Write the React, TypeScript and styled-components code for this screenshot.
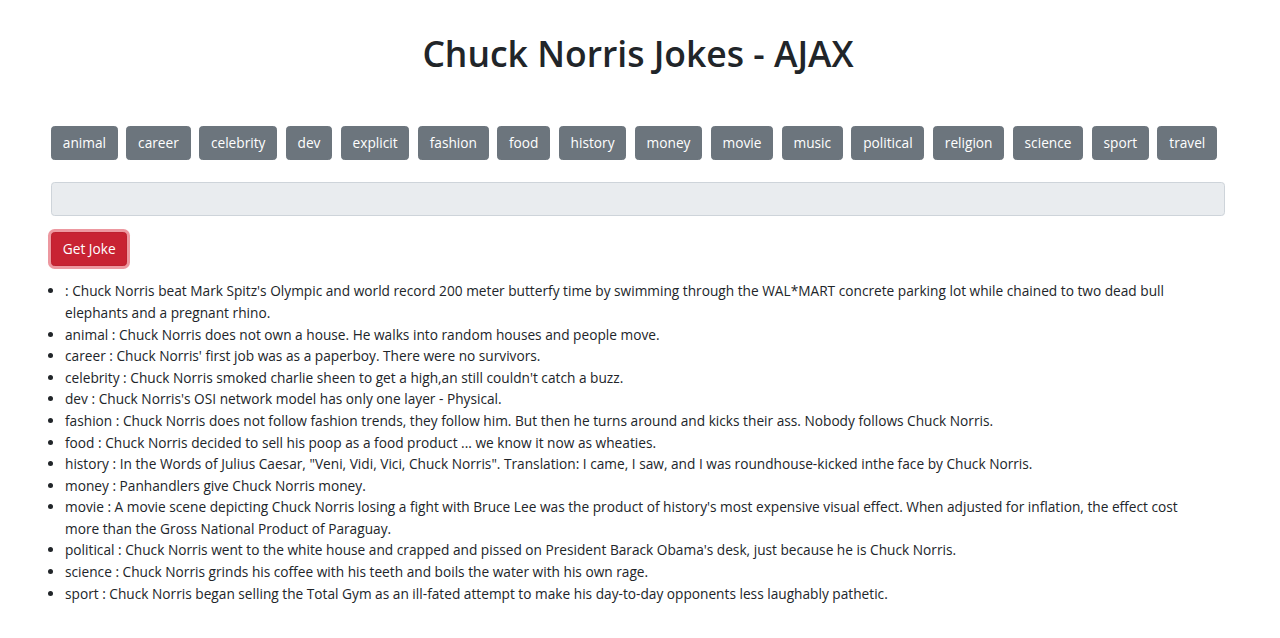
import React from "react";
import styled, { createGlobalStyle } from "styled-components";

const Global = createGlobalStyle`
  html, body { margin: 0; padding: 0; background: #fff; }
  body {
    font-family: "Open Sans", "Noto Sans", sans-serif;
    font-size: 13.7px;
    line-height: 1.5;
    color: #212529;
  }
`;

const Page = styled.div`
  width: 1174px;
  margin: 0 0 0 51px;
  padding-top: 32px;
`;

const Title = styled.h1`
  margin: 0 0 51px;
  text-align: center;
  font-size: 35.5px;
  font-weight: 600;
  line-height: 1.2;
  color: #212529;
`;

const Categories = styled.div`
  display: flex;
  flex-wrap: wrap;
  gap: 8.5px;
`;

const Button = styled.button<{ $variant?: "secondary" | "danger" }>`
  font-family: inherit;
  font-size: 13.7px;
  line-height: 21.6px;
  padding: 5.4px 10.8px;
  border-radius: 3.6px;
  border: 1px solid ${(p) => (p.$variant === "danger" ? "#bd2130" : "#6c757d")};
  background: ${(p) => (p.$variant === "danger" ? "#c82333" : "#6c757d")};
  color: #fff;
  cursor: pointer;
  box-shadow: ${(p) =>
    p.$variant === "danger" ? "0 0 0 3px rgba(225, 83, 97, 0.6)" : "none"};
`;

const Input = styled.input`
  display: block;
  box-sizing: border-box;
  width: 100%;
  height: 34px;
  margin: 22px 0 16px;
  padding: 5px 10.8px;
  font-family: inherit;
  font-size: 13.7px;
  background: #e9ecef;
  border: 1px solid #ced4da;
  border-radius: 3.6px;
`;

const Jokes = styled.ul`
  margin: 14px 0 0;
  padding: 0 20px 0 14px;
  line-height: 21.6px;
`;

const Joke = styled.li``;

const categories = [
  "animal", "career", "celebrity", "dev", "explicit", "fashion", "food", "history",
  "money", "movie", "music", "political", "religion", "science", "sport", "travel",
];

const jokes: [string, string][] = [
  ["", "Chuck Norris beat Mark Spitz's Olympic and world record 200 meter butterfy time by swimming through the WAL*MART concrete parking lot while chained to two dead bull elephants and a pregnant rhino."],
  ["animal", "Chuck Norris does not own a house. He walks into random houses and people move."],
  ["career", "Chuck Norris' first job was as a paperboy. There were no survivors."],
  ["celebrity", "Chuck Norris smoked charlie sheen to get a high,an still couldn't catch a buzz."],
  ["dev", "Chuck Norris's OSI network model has only one layer - Physical."],
  ["fashion", "Chuck Norris does not follow fashion trends, they follow him. But then he turns around and kicks their ass. Nobody follows Chuck Norris."],
  ["food", "Chuck Norris decided to sell his poop as a food product ... we know it now as wheaties."],
  ["history", "In the Words of Julius Caesar, \"Veni, Vidi, Vici, Chuck Norris\". Translation: I came, I saw, and I was roundhouse-kicked inthe face by Chuck Norris."],
  ["money", "Panhandlers give Chuck Norris money."],
  ["movie", "A movie scene depicting Chuck Norris losing a fight with Bruce Lee was the product of history's most expensive visual effect. When adjusted for inflation, the effect cost more than the Gross National Product of Paraguay."],
  ["political", "Chuck Norris went to the white house and crapped and pissed on President Barack Obama's desk, just because he is Chuck Norris."],
  ["science", "Chuck Norris grinds his coffee with his teeth and boils the water with his own rage."],
  ["sport", "Chuck Norris began selling the Total Gym as an ill-fated attempt to make his day-to-day opponents less laughably pathetic."],
];

export default function App() {
  return (
    <>
      <Global />
      <Page>
        <Title>Chuck Norris Jokes - AJAX</Title>
        <Categories>
          {categories.map((c) => (
            <Button key={c} $variant="secondary">{c}</Button>
          ))}
        </Categories>
        <Input readOnly />
        <Button $variant="danger">Get Joke</Button>
        <Jokes>
          {jokes.map(([c, j], i) => (
            <Joke key={i}>{c} : {j}</Joke>
          ))}
        </Jokes>
      </Page>
    </>
  );
}
